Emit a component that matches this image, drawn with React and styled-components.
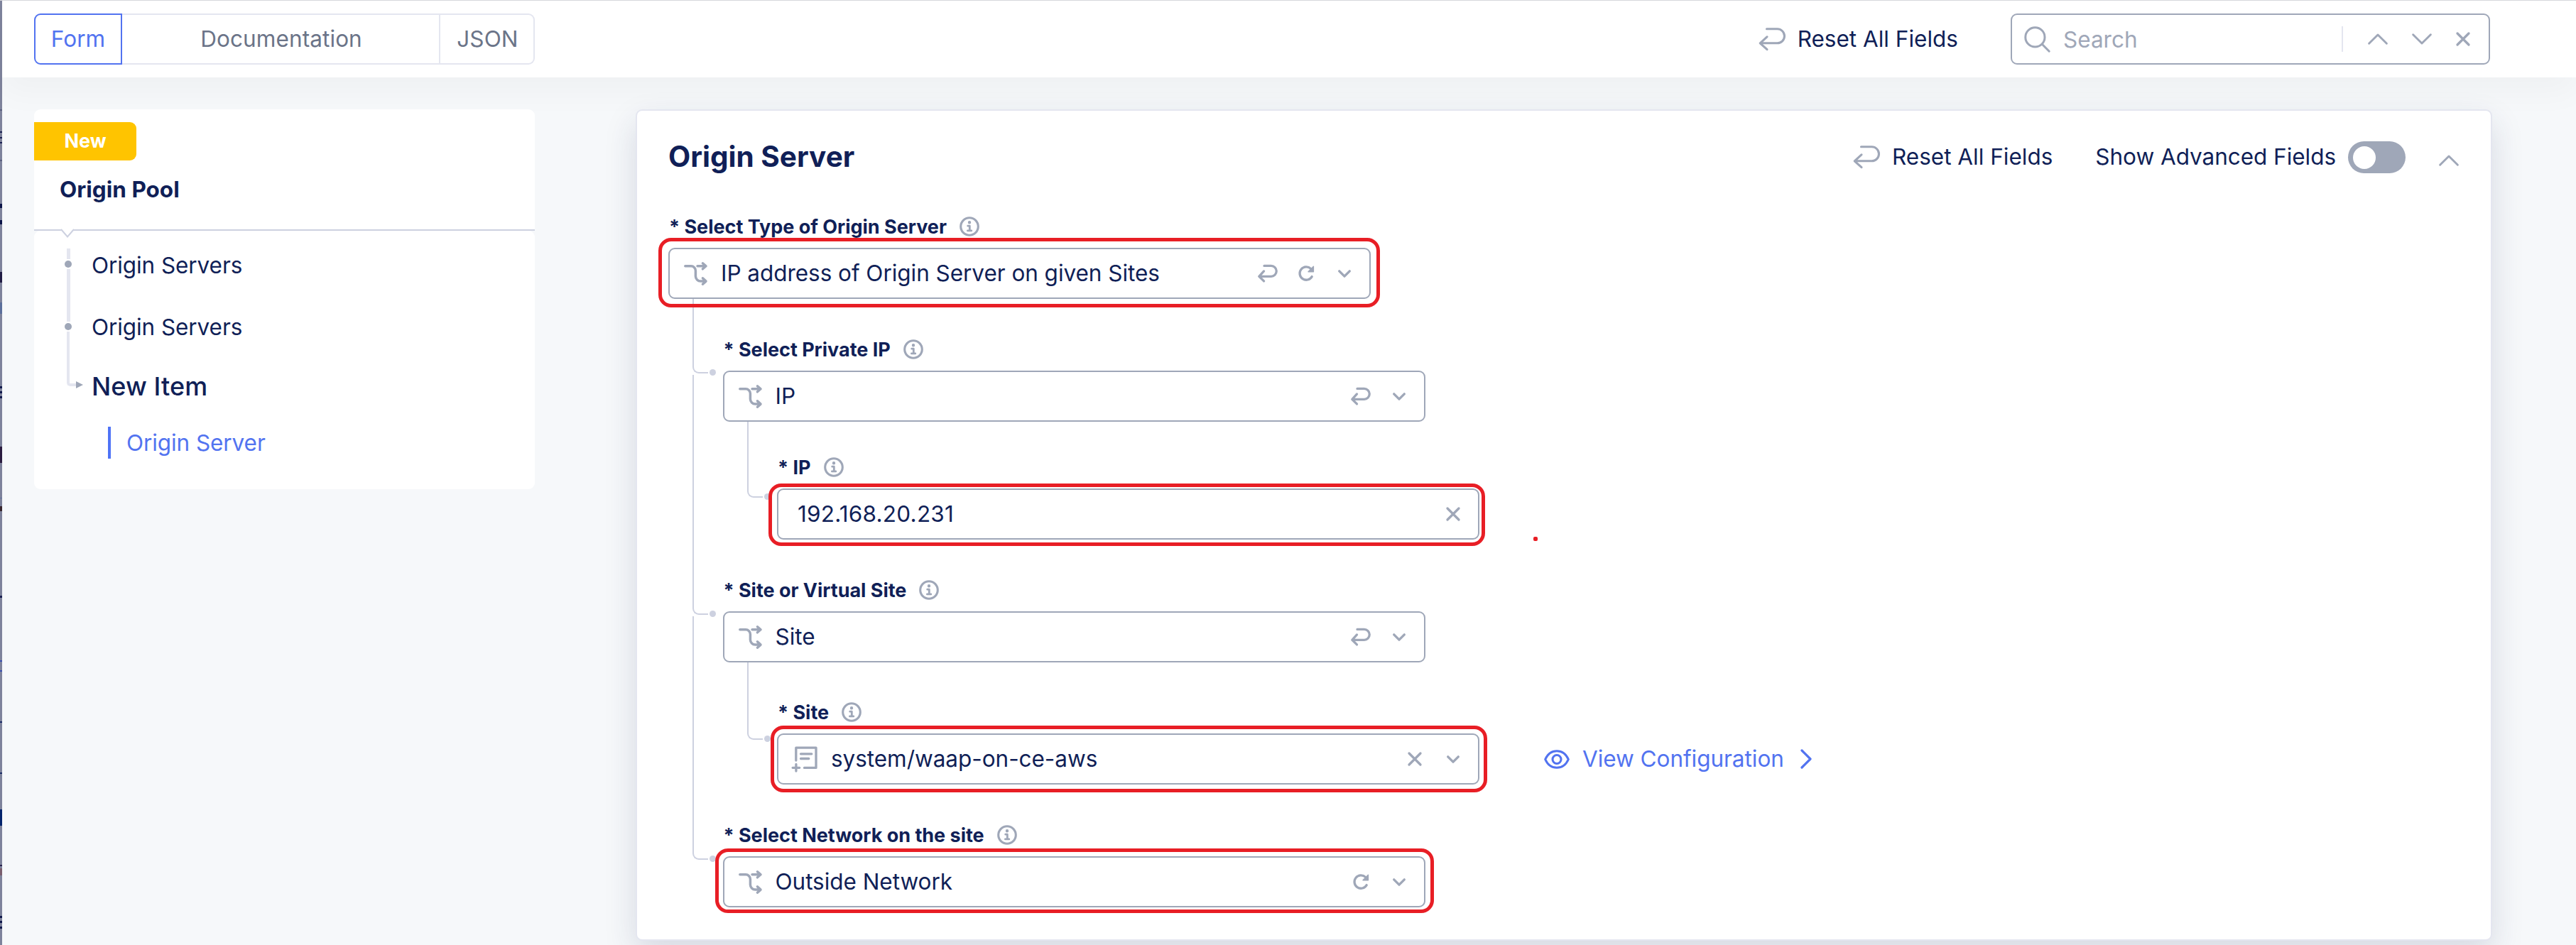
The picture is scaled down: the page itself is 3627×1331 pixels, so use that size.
import React from 'react';
import styled, { createGlobalStyle, css } from 'styled-components';

const c = {
  navy: '#101f57',
  blue: '#5273f0',
  gray: '#9fa7b8',
  slate: '#6b7488',
  line: '#e4e6f0',
  tree: '#cdd1e0',
  bg: '#f6f8fa',
  red: '#e81e25',
  amber: '#ffc400',
};

const GlobalStyle = createGlobalStyle`
  *, *::before, *::after { box-sizing: border-box; }
  body {
    margin: 0;
    background: ${c.bg};
    color: ${c.navy};
    font: 400 31.5px/40px Inter, "Liberation Sans", sans-serif;
    overflow: hidden;
  }
`;

/* ---------- icons ---------- */

const Svg = styled.svg`
  display: block;
  flex: none;
  fill: none;
  stroke: ${p => p.$color || c.gray};
  stroke-width: ${p => p.$stroke || 3.3};
  stroke-linecap: round;
  stroke-linejoin: round;
  overflow: visible;
`;

const ResetLarge = () => (
  <Svg width="37" height="34" viewBox="12 14 37 34" $stroke={3.1}>
    <path d="M22.5 16.8H37.5a10 10 0 0 1 0 20H13.5M23 27.8L13.2 36.8l9.8 8.8" />
  </Svg>
);
const ResetSmall = () => (
  <Svg width="28" height="26" viewBox="11.5 12 28 26" $stroke={3.3}>
    <path d="M20.5 14.4h9.8a7.4 7.4 0 0 1 0 14.9H13.5M20 21.9l-6.7 7.4 6.7 6.6" />
  </Svg>
);
const Refresh = () => (
  <Svg width="24" height="24" viewBox="67 13 24 24">
    <path d="M87.2 29.6A9.2 9.2 0 1 1 85.6 18.4" />
    <path d="M89.4 15.2v7.6h-7.4z" fill={c.gray} stroke={c.gray} strokeWidth="1.4" />
  </Svg>
);
const ChevronSmall = () => (
  <Svg width="18" height="11" viewBox="0 0 18 11">
    <path d="M1.7 1.8L9 9.2l7.3-7.4" />
  </Svg>
);
const Chevron = ({ up }) => (
  <Svg width="28" height="16" viewBox="0 0 28 16" $stroke={2.9}>
    <path d={up ? 'M1.6 14.3L14 2l12.4 12.3' : 'M1.6 1.7L14 14 26.4 1.7'} />
  </Svg>
);
const Cross = () => (
  <Svg width="20" height="20" viewBox="0 0 20 20" $stroke={3.3}>
    <path d="M2 2l16 16M18 2L2 18" />
  </Svg>
);
const Magnifier = () => (
  <Svg width="37" height="37" viewBox="0 0 37 37" $stroke={3}>
    <circle cx="15.4" cy="15.4" r="13.6" />
    <path d="M25.3 25.3l9.9 9.9" />
  </Svg>
);
const Branching = () => (
  <Svg width="33" height="33" viewBox="0 0 33 33" $stroke={3.5}>
    <path d="M1.8 5.8H10a6.4 6.4 0 0 1 6.4 6.4V20a7 7 0 0 0 7 7H30M19 5.8h11.5M26.4 1.8l4.6 4-4.6 4M26.4 22.8l4.6 4.3-4.6 4.1" />
  </Svg>
);
const DocumentAdd = () => (
  <Svg width="35" height="37" viewBox="15.5 10.5 35 37">
    <path d="M20.3 30.5V12.7h28.2v28.2H32M27 21.3h15.3M27 28h11.3M20.4 36v9.5M15.6 40.8h9.6" />
  </Svg>
);
const Info = () => (
  <Svg width="28" height="28" viewBox="0 0 28 28" $stroke={3.1}>
    <circle cx="14" cy="14" r="12.3" />
    <circle cx="14" cy="8.2" r="1.5" fill={c.gray} strokeWidth="1.4" />
    <path d="M11.7 13.2h2.6v6.6M11.4 19.9h5.4" strokeWidth="2.8" />
  </Svg>
);
const Eye = () => (
  <Svg width="36" height="27" viewBox="0 0 36 27" $color={c.blue} $stroke={3.1}>
    <path d="M1.7 13.5C5 6 11 1.7 18 1.7S31 6 34.3 13.5C31 21 25 25.3 18 25.3S5 21 1.7 13.5z" />
    <circle cx="18" cy="13.5" r="6" />
  </Svg>
);
const ChevronRight = () => (
  <Svg width="16" height="28" viewBox="0 0 16 28" $color={c.blue} $stroke={3.2}>
    <path d="M2 2l12 12L2 26" />
  </Svg>
);

/* ---------- page shell ---------- */

const Page = styled.div`
  display: flex;
  height: 1331px;
  border-top: 1px solid #d6d7db;
  overflow: hidden;
`;

const mark = (y, h, color) => `linear-gradient(${color}, ${color}) 0 ${y}px / 3px ${h}px no-repeat`;

const BackdropEdge = styled.div`
  flex: none;
  width: 3px;
  background:
    ${[
      mark(153, 2, '#5b6080'),
      mark(184, 2, '#1b2152'), mark(192, 2, '#1b2152'), mark(199, 2, '#1b2152'),
      mark(224, 2, '#5b6080'),
      mark(286, 6, '#0c1548'), mark(309, 6, '#0c1548'),
      mark(382, 15, '#211c44'),
      mark(425, 16, '#5c6f9c'),
      mark(543, 3, '#111a4c'), mark(550, 3, '#111a4c'), mark(557, 3, '#111a4c'),
      mark(628, 23, '#2b1c40'),
      mark(700, 1, '#60729c'),
      mark(712, 7, '#38272f'),
      mark(838, 3, '#1b2152'),
      mark(929, 2, '#3c52b0'), mark(943, 2, '#3c52b0'),
      mark(1015, 2, '#1c2c66'),
      mark(1087, 2, '#1c2c66'),
      mark(1139, 23, '#04246c'),
      mark(1217, 2, '#2b2450'), mark(1222, 10, '#7a5f6e'),
      mark(1289, 3, '#111a4c'), mark(1296, 3, '#111a4c'), mark(1304, 3, '#111a4c'),
    ].join(',')},
    #7e839c;
`;

const Main = styled.div`
  flex: 1;
  min-width: 0;
  display: flex;
  flex-direction: column;
`;

const Header = styled.header`
  flex: none;
  display: flex;
  align-items: center;
  height: 108px;
  padding: 0 121px 0 45px;
  background: #fff;
  box-shadow: 0 22px 45px rgba(30, 30, 40, 0.03);
`;

const Content = styled.div`
  position: relative;
  display: flex;
  align-items: flex-start;
  gap: 142px;
  padding: 45px 118px 0 45px;
`;

/* ---------- header ---------- */

const Tabs = styled.nav`
  display: flex;
  width: 705px;
  height: 72px;
`;

const Tab = styled.button`
  flex: none;
  width: ${p => p.$width}px;
  padding: 0 0 0 ${p => (p.$joined ? 2 : 0)}px;
  border: 2px solid ${c.line};
  border-left-width: ${p => (p.$joined ? 0 : 2)}px;
  border-radius: ${p => p.$radius || 0};
  background: #fff;
  color: ${c.slate};
  font: inherit;
  letter-spacing: 0.1px;
  ${p => p.$active && css`
    border-color: ${c.blue};
    color: ${c.blue};
  `}
`;

const ResetLink = styled.a`
  display: flex;
  align-items: center;
  gap: 17px;
  padding-bottom: ${p => p.$lift || 0}px;
  white-space: nowrap;
`;

const SearchBox = styled.div`
  display: flex;
  align-items: center;
  width: 675px;
  height: 72px;
  margin-left: 74px;
  padding: 0 26px 0 17px;
  border: 2px solid ${c.gray};
  border-radius: 9px;
`;

const Placeholder = styled.span`
  flex: 1;
  padding: 1px 0 0 18px;
  color: ${c.gray};
`;

const SearchActions = styled.div`
  display: flex;
  align-items: center;
  gap: 34px;
  height: 36px;
  padding-left: 35px;
  border-left: 2px solid ${c.line};
`;

const Spacer = styled.div`
  flex: 1;
`;

/* ---------- side navigation ---------- */

const SideCard = styled.aside`
  flex: none;
  width: 705px;
`;

const SideHead = styled.div`
  position: relative;
  height: 171px;
  padding-top: 18px;
  background: #fff;
  border-radius: 9px 9px 0 0;
  border-bottom: 2px solid ${c.tree};
`;

const Badge = styled.div`
  display: flex;
  align-items: center;
  justify-content: center;
  width: 144px;
  height: 54px;
  border-radius: 0 9px 9px 0;
  background: ${c.amber};
  color: #fff;
  font-size: 27px;
  font-weight: 700;
`;

const PoolName = styled.div`
  margin-top: 21px;
  padding-left: 36px;
  font-weight: 700;
`;

const Notch = styled.svg`
  position: absolute;
  left: 36px;
  bottom: -12px;
  fill: #fff;
  stroke: ${c.tree};
  stroke-width: 2;
`;

const SideBody = styled.div`
  display: flex;
  height: 364px;
  padding: 25px 0 0 43px;
  background: #fff;
  border-radius: 9px;
`;

const Trail = styled.div`
  display: flex;
  flex-direction: column;
  width: 38px;
`;

const TrailLine = styled.div`
  width: 5px;
  height: ${p => p.$height}px;
  margin-left: 2.5px;
  background: ${c.line};
`;

const TrailDot = styled.div`
  width: 10px;
  height: 10px;
  margin: 2px 0;
  border-radius: 50%;
  background: ${c.gray};
`;

const TrailEnd = styled.div`
  display: flex;
  align-items: flex-end;
  margin-left: 2.5px;
`;

const TrailElbow = styled.div`
  width: 13px;
  height: 77px;
  border: solid ${c.line};
  border-width: 0 0 4px 4px;
  border-bottom-left-radius: 5px;
`;

const TrailArrow = styled.div`
  margin-bottom: -3px;
  border: 5.5px solid transparent;
  border-left: 10px solid ${c.gray};
  border-right: 0;
`;

const SideItems = styled.div`
  display: flex;
  flex-direction: column;
`;

const SideItem = styled.div`
  margin-top: ${p => p.$gap}px;
  letter-spacing: -0.08px;
  ${p => p.$current && css`
    font-size: 36px;
    font-weight: 500;
    letter-spacing: 0.1px;
  `}
`;

const SideChild = styled.div`
  display: flex;
  align-items: center;
  height: 45px;
  margin: 37px 0 0 23px;
  padding-left: 22px;
  border-left: 4px solid #4f73f6;
  color: ${c.blue};
  letter-spacing: -0.08px;
`;

/* ---------- form panel ---------- */

const Panel = styled.section`
  flex: 1;
  min-width: 0;
  height: 1171px;
  padding: 43px 45px 0 44px;
  background: #fff;
  border: 2px solid ${c.line};
  border-radius: 9px;
  box-shadow: 0 18px 45px rgba(36, 44, 92, 0.15);
`;

const PanelHead = styled.div`
  display: flex;
  align-items: center;
  height: 45px;
  margin-bottom: 61px;
`;

const Title = styled.h1`
  flex: 1;
  margin: 0;
  padding-bottom: 2px;
  font-size: 40.5px;
  font-weight: 700;
`;

const SwitchLabel = styled.label`
  display: flex;
  align-items: center;
  gap: 17px;
  margin-left: 60px;
  white-space: nowrap;
`;

const SwitchText = styled.span`
  padding-bottom: 2px;
  letter-spacing: -0.04px;
`;

const Switch = styled.span`
  display: flex;
  align-items: center;
  width: 81px;
  height: 45px;
  padding-left: 7px;
  border-radius: 23px;
  background: ${c.gray};
`;

const Knob = styled.span`
  width: 32px;
  height: 32px;
  border-radius: 50%;
  background: #fff;
`;

const Collapse = styled.div`
  margin: 9px 0 0 47px;
`;

const FieldBlock = styled.div`
  margin-top: ${p => p.$gap || 0}px;
`;

const FieldLabel = styled.div`
  display: flex;
  align-items: center;
  gap: 18px;
  height: 28px;
  margin-bottom: 16px;
  padding-left: 1px;
  font-size: 27px;
  font-weight: 700;
  letter-spacing: -0.02px;
  white-space: nowrap;
`;

const LabelText = styled.span`
  padding-top: 1px;
`;

const FieldRow = styled.div`
  position: relative;
  display: flex;
  align-items: center;
`;

const Control = styled.div`
  flex: none;
  display: flex;
  align-items: center;
  width: 989px;
  height: 72px;
  padding: 0 8px 0 ${p => (p.$plain ? 27 : 20)}px;
  border: 2px solid ${c.gray};
  border-radius: 9px;
  background: #fff;
`;

const Value = styled.span`
  flex: 1;
  padding-left: ${p => (p.$plain ? 0 : 19)}px;
  letter-spacing: ${p => (p.$plain ? 0.22 : -0.04)}px;
  white-space: nowrap;
`;

const Action = styled.span`
  display: flex;
  justify-content: center;
  width: 54px;
`;

const Highlight = styled.div`
  position: absolute;
  z-index: 1;
  top: ${p => -p.$top}px;
  left: ${p => -p.$left}px;
  width: ${p => 989 + p.$left + p.$right}px;
  height: ${p => 72 + p.$top + p.$bottom}px;
  border: 5px solid ${c.red};
  border-radius: 18px;
`;

const RedDot = styled.div`
  position: absolute;
  left: 1065px;
  top: 68px;
  width: 6px;
  height: 6px;
  border-radius: 2px;
  background: ${c.red};
`;

const ViewLink = styled.a`
  display: flex;
  align-items: center;
  gap: 18px;
  margin-left: 91px;
  color: ${c.blue};
  letter-spacing: -0.04px;
  white-space: nowrap;

  svg:last-child { margin-left: 5px; }
`;

const Nested = styled.div`
  display: grid;
  grid-template-columns: 76.5px 1fr;
`;

const Connectors = styled.div`
  display: flex;
  flex-direction: column;
  gap: 2px;
  padding-left: 34px;
`;

const Connector = styled.div`
  display: flex;
  align-items: flex-end;
  gap: 2px;
  height: ${p => p.$height}px;
`;

const Elbow = styled.div`
  width: 22px;
  height: 100%;
  border: solid ${c.tree};
  border-width: 0 0 2px 2px;
  border-bottom-left-radius: 9px;
`;

const ElbowDot = styled.div`
  width: 9px;
  height: 9px;
  margin-bottom: -3px;
  border-radius: 50%;
  background: ${c.tree};
`;

const actionIcons = { reset: ResetSmall, refresh: Refresh, open: ChevronSmall, clear: Cross };

function Field({ label, value, icon: Icon, actions, highlight, gap, extra, children }) {
  return (
    <FieldBlock $gap={gap}>
      <FieldLabel><LabelText>* {label}</LabelText><Info /></FieldLabel>
      <FieldRow>
        <Control $plain={!Icon}>
          {Icon && <Icon />}
          <Value $plain={!Icon}>{value}</Value>
          {actions.map(name => {
            const ActionIcon = actionIcons[name];
            return <Action key={name}><ActionIcon /></Action>;
          })}
        </Control>
        {highlight && (
          <Highlight $top={highlight[0]} $right={highlight[1]} $bottom={highlight[2]} $left={highlight[3]} />
        )}
        {extra}
      </FieldRow>
      {children}
    </FieldBlock>
  );
}

function Branch({ heights, children }) {
  return (
    <Nested>
      <Connectors>
        {heights.map((h, i) => (
          <Connector key={i} $height={h}><Elbow /><ElbowDot /></Connector>
        ))}
      </Connectors>
      <div>{children}</div>
    </Nested>
  );
}

export default function App() {
  return (
    <Page>
      <GlobalStyle />
      <BackdropEdge />
      <Main>
        <Header>
          <Tabs>
            <Tab $active $width={124} $radius="9px 0 0 9px">Form</Tab>
            <Tab $joined $width={448}>Documentation</Tab>
            <Tab $joined $width={133} $radius="0 9px 9px 0">JSON</Tab>
          </Tabs>
          <Spacer />
          <ResetLink><ResetLarge />Reset All Fields</ResetLink>
          <SearchBox>
            <Magnifier />
            <Placeholder>Search</Placeholder>
            <SearchActions>
              <Chevron up />
              <Chevron />
              <Cross />
            </SearchActions>
          </SearchBox>
        </Header>

        <Content>
          <SideCard>
            <SideHead>
              <Badge>New</Badge>
              <PoolName>Origin Pool</PoolName>
              <Notch width="22" height="13" viewBox="0 0 22 13">
                <path d="M1 0v.5h1L11 11.5 20 .5h1V0" stroke="none" />
                <path d="M2 1L11 11.5 20 1" />
              </Notch>
            </SideHead>
            <SideBody>
              <Trail>
                <TrailLine $height={15} />
                <TrailDot />
                <TrailLine $height={74} />
                <TrailDot />
                <TrailEnd><TrailElbow /><TrailArrow /></TrailEnd>
              </Trail>
              <SideItems>
                <SideItem $gap={4}>Origin Servers</SideItem>
                <SideItem $gap={47}>Origin Servers</SideItem>
                <SideItem $gap={43} $current>New Item</SideItem>
                <SideChild>Origin Server</SideChild>
              </SideItems>
            </SideBody>
          </SideCard>

          <Panel>
            <PanelHead>
              <Title>Origin Server</Title>
              <ResetLink $lift={2}><ResetLarge />Reset All Fields</ResetLink>
              <SwitchLabel>
                <SwitchText>Show Advanced Fields</SwitchText>
                <Switch><Knob /></Switch>
              </SwitchLabel>
              <Collapse><Chevron up /></Collapse>
            </PanelHead>

            <Field
              label="Select Type of Origin Server"
              value="IP address of Origin Server on given Sites"
              icon={Branching}
              actions={['reset', 'refresh', 'open']}
              highlight={[14, 13, 12, 14]}
            >
              <Branch heights={[105, 338, 343]}>
                <Field gap={57} label="Select Private IP" value="IP" icon={Branching} actions={['reset', 'open']}>
                  <Branch heights={[107]}>
                    <Field
                      gap={50}
                      label="IP"
                      value="192.168.20.231"
                      actions={['clear']}
                      highlight={[7, 8, 9, 12]}
                      extra={<RedDot />}
                    />
                  </Branch>
                </Field>
                <Field gap={57} label="Site or Virtual Site" value="Site" icon={Branching} actions={['reset', 'open']}>
                  <Branch heights={[109]}>
                    <Field
                      gap={56}
                      label="Site"
                      value="system/waap-on-ce-aws"
                      icon={DocumentAdd}
                      actions={['clear', 'open']}
                      highlight={[11, 11, 11, 9]}
                      extra={<ViewLink><Eye />View Configuration<ChevronRight /></ViewLink>}
                    />
                  </Branch>
                </Field>
                <Field
                  gap={57}
                  label="Select Network on the site"
                  value="Outside Network"
                  icon={Branching}
                  actions={['refresh', 'open']}
                  highlight={[11, 12, 8, 11]}
                />
              </Branch>
            </Field>
          </Panel>
        </Content>
      </Main>
    </Page>
  );
}
